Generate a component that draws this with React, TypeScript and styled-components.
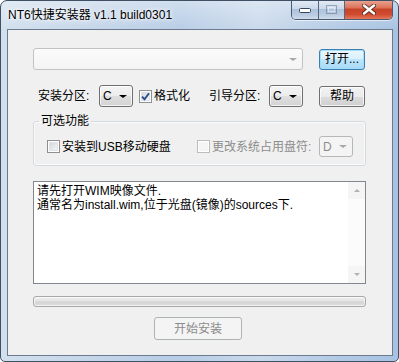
import styled, { createGlobalStyle } from "styled-components";

const GlobalStyle = createGlobalStyle`
  html, body {
    margin: 0;
    padding: 0;
    background: #ffffff;
  }
  body {
    font-family: "Liberation Sans", "Noto Sans CJK SC", sans-serif;
    font-size: 12px;
    color: #000;
  }
`;

const Frame = styled.div`
  width: 399px;
  height: 362px;
  box-sizing: border-box;
  border: 1px solid #3f5064;
  border-radius: 7px 7px 5px 5px;
  background: linear-gradient(
      180deg,
      rgba(255, 255, 255, 0.35) 0px,
      rgba(255, 255, 255, 0) 30px
    ),
    linear-gradient(
      90deg,
      #d2e0ee 0%,
      #c3d5e9 25%,
      #b7cde6 45%,
      #c9d9eb 65%,
      #b3cae5 85%,
      #a7c2e2 100%
    );
  display: flex;
  flex-direction: column;
  overflow: hidden;
`;

const TitleBar = styled.div`
  height: 28px;
  display: flex;
  justify-content: space-between;
  align-items: flex-start;
`;

const TitleText = styled.div`
  padding: 7px 0 0 7px;
  line-height: 14px;
  color: #000;
  text-shadow: 0 0 6px #ffffff, 0 0 3px #ffffff;
`;

const CaptionGroup = styled.div`
  display: flex;
  margin: -1px 5px 0 0;
  height: 19px;
  border: 1px solid #4a5a70;
  border-top: none;
  border-radius: 0 0 5px 5px;
  overflow: hidden;
  box-shadow: 0 1px 0 rgba(255, 255, 255, 0.6);
`;

const CaptionButton = styled.div<{ $kind: "min" | "max" | "close" }>`
  width: ${(p) => (p.$kind === "close" ? 47 : p.$kind === "min" ? 26 : 25)}px;
  display: flex;
  align-items: center;
  justify-content: center;
  border-left: ${(p) => (p.$kind === "min" ? "none" : "1px solid #56667c")};
  background: ${(p) =>
    p.$kind === "close"
      ? "linear-gradient(180deg, #e9a898 0%, #dc7459 40%, #c7432a 50%, #cf4a2f 75%, #e5785b 100%)"
      : "linear-gradient(180deg, #e4ecf5 0%, #cbd9ea 45%, #aec2db 50%, #bccde2 80%, #cfdcec 100%)"};
  box-shadow: inset 0 1px 0 rgba(255, 255, 255, 0.55);
`;

const Client = styled.div`
  flex: 1;
  margin: 0 5px 5px 6px;
  border: 1px solid #6b7a8c;
  background: #f0f0f0;
  padding: 18px 26px 0 25px;
  display: flex;
  flex-direction: column;
`;

const TopRow = styled.div<{ $gap?: number }>`
  display: grid;
  grid-template-columns: 270px 46px;
  column-gap: 16px;
  align-items: center;
  height: 22px;
  margin-top: ${(p) => p.$gap ?? 0}px;
`;

const ComboBox = styled.div`
  height: 22px;
  box-sizing: border-box;
  border: 1px solid #c2c2c2;
  border-radius: 3px;
  background: linear-gradient(180deg, #fbfbfb, #f4f4f4);
  display: flex;
  justify-content: flex-end;
  align-items: center;
  padding-right: 5px;
`;

const PushButton = styled.button<{ $focused?: boolean; $w?: number; $h?: number }>`
  width: ${(p) => p.$w ?? 46}px;
  height: ${(p) => p.$h ?? 21}px;
  padding: 0;
  font: inherit;
  line-height: 14px;
  color: #000;
  border: 1px solid ${(p) => (p.$focused ? "#3c7fb1" : "#707070")};
  border-radius: 3px;
  background: ${(p) =>
    p.$focused
      ? "linear-gradient(180deg, #eaf6fd 0%, #d9f0fc 50%, #bee6fd 50%, #a7d9f5 100%)"
      : "linear-gradient(180deg, #f2f2f2 0%, #ebebeb 50%, #dddddd 50%, #cfcfcf 100%)"};
  box-shadow: inset 0 0 0 1px
    ${(p) => (p.$focused ? "rgba(160, 220, 250, 0.9)" : "rgba(255, 255, 255, 0.75)")};
`;

const DisabledButton = styled.button`
  width: 88px;
  height: 23px;
  padding: 0;
  font: inherit;
  line-height: 14px;
  color: #8b8b8b;
  border: 1px solid #adb2b5;
  border-radius: 3px;
  background: #f4f4f4;
  align-self: flex-start;
  margin: 10px 0 0 121px;
`;

const LeftCluster = styled.div`
  display: flex;
  align-items: center;
  height: 22px;
  padding-left: 5px;
`;

const Label = styled.span<{ $w?: number; $ml?: number; $disabled?: boolean }>`
  display: inline-block;
  width: ${(p) => (p.$w ? `${p.$w}px` : "auto")};
  margin-left: ${(p) => p.$ml ?? 0}px;
  line-height: 14px;
  white-space: nowrap;
  color: ${(p) => (p.$disabled ? "#8d8d8d" : "#000")};
`;

const Select = styled.div<{ $disabled?: boolean; $h?: number }>`
  width: 34px;
  height: ${(p) => p.$h ?? 22}px;
  box-sizing: border-box;
  border: 1px solid ${(p) => (p.$disabled ? "#b4b8bb" : "#707070")};
  border-radius: 3px;
  background: ${(p) =>
    p.$disabled
      ? "#f4f4f4"
      : "linear-gradient(180deg, #f4f4f4 0%, #ececec 50%, #dfdfdf 50%, #d3d3d3 100%)"};
  box-shadow: ${(p) => (p.$disabled ? "none" : "inset 0 0 0 1px rgba(255,255,255,0.7)")};
  display: flex;
  align-items: center;
  justify-content: space-between;
  padding: 0 5px 0 3px;
  color: ${(p) => (p.$disabled ? "#8d8d8d" : "#000")};
  line-height: 14px;
`;

const Arrow = styled.span<{ $color: string; $size?: number }>`
  width: 0;
  height: 0;
  border-left: ${(p) => p.$size ?? 4}px solid transparent;
  border-right: ${(p) => p.$size ?? 4}px solid transparent;
  border-top: ${(p) => (p.$size ?? 4) - 1}px solid ${(p) => p.$color};
`;

const Box = styled.span<{ $disabled?: boolean; $ml?: number }>`
  width: 13px;
  height: 13px;
  flex: none;
  box-sizing: border-box;
  margin-left: ${(p) => p.$ml ?? 0}px;
  border: 1px solid ${(p) => (p.$disabled ? "#bcbcbc" : "#8e8f8f")};
  background: ${(p) =>
    p.$disabled ? "#f4f4f4" : "linear-gradient(135deg, #cdd1d7 0%, #e9ebee 60%, #f8f8f8 100%)"};
  box-shadow: ${(p) =>
    p.$disabled ? "inset 0 0 0 1px #ffffff" : "inset 0 0 0 1px #ffffff, inset 0 0 0 2px #dfe2e6"};
  display: flex;
  align-items: center;
  justify-content: center;
`;

const Group = styled.fieldset`
  margin: 7px 0 0;
  padding: 8px 11px 8px 13px;
  border: 1px solid #d5dadf;
  border-radius: 3px;
  box-shadow: inset 0 0 0 1px #fafafa;
  min-width: 0;
`;

const GroupTitle = styled.legend`
  padding: 0 2px;
  margin-left: -8px;
  line-height: 14px;
`;

const GroupRow = styled.div`
  display: flex;
  align-items: center;
  height: 21px;
`;

const TextBox = styled.div`
  margin-top: 15px;
  height: 103px;
  box-sizing: border-box;
  border: 1px solid #828790;
  background: #ffffff;
  display: flex;
`;

const TextBody = styled.div`
  flex: 1;
  padding: 2px 3px;
  line-height: 14px;
`;

const ScrollBar = styled.div`
  width: 17px;
  background: #fbfbfb;
  display: flex;
  flex-direction: column;
  justify-content: space-between;
`;

const ScrollArrow = styled.div<{ $up?: boolean }>`
  height: 17px;
  background: #f5f5f5;
  display: flex;
  align-items: center;
  justify-content: center;

  span {
    width: 0;
    height: 0;
    border-left: 3px solid transparent;
    border-right: 3px solid transparent;
    ${(p) => (p.$up ? "border-bottom" : "border-top")}: 3px solid #b2b2b2;
  }
`;

const Progress = styled.div`
  margin-top: 12px;
  height: 11px;
  box-sizing: border-box;
  border: 1px solid #a9a9a9;
  border-radius: 3px;
  background: linear-gradient(180deg, #f2f2f2 0%, #e2e2e2 45%, #d4d4d4 55%, #dedede 100%);
  box-shadow: inset 0 0 0 1px rgba(255, 255, 255, 0.6);
`;

const Check = () => (
  <svg width="9" height="9" viewBox="0 0 9 9">
    <path d="M1 4.6 L3.5 7.2 L8 1.2" fill="none" stroke="#2b4e91" strokeWidth="1.9" />
  </svg>
);

const CloseGlyph = () => (
  <svg width="14" height="11" viewBox="0 0 14 11">
    <path
      d="M2 1.5 L12 9.5 M12 1.5 L2 9.5"
      stroke="#3b1f1a"
      strokeWidth="4.2"
      strokeLinecap="round"
      opacity="0.75"
    />
    <path d="M2 1.5 L12 9.5 M12 1.5 L2 9.5" stroke="#ffffff" strokeWidth="2.4" strokeLinecap="round" />
  </svg>
);

const MinGlyph = () => (
  <svg width="12" height="6" viewBox="0 0 12 6">
    <rect x="0.5" y="1.5" width="11" height="4" rx="1" fill="#ffffff" stroke="#34465e" />
  </svg>
);

const MaxGlyph = () => (
  <svg width="11" height="9" viewBox="0 0 11 9" opacity="0.45">
    <rect x="0.5" y="0.5" width="10" height="8" fill="none" stroke="#4c5f78" />
    <rect x="2.5" y="2.5" width="6" height="4" fill="none" stroke="#ffffff" />
  </svg>
);

export default function App() {
  return (
    <>
      <GlobalStyle />
      <Frame>
        <TitleBar>
          <TitleText>NT6快捷安装器 v1.1 build0301</TitleText>
          <CaptionGroup>
            <CaptionButton $kind="min">
              <MinGlyph />
            </CaptionButton>
            <CaptionButton $kind="max">
              <MaxGlyph />
            </CaptionButton>
            <CaptionButton $kind="close">
              <CloseGlyph />
            </CaptionButton>
          </CaptionGroup>
        </TitleBar>
        <Client>
          <TopRow>
            <ComboBox>
              <Arrow $color="#a8a8a8" $size={4} />
            </ComboBox>
            <PushButton $focused>打开...</PushButton>
          </TopRow>
          <TopRow $gap={15}>
            <LeftCluster>
              <Label $w={61}>安装分区:</Label>
              <Select>
                C<Arrow $color="#000" />
              </Select>
              <Box $ml={6}>
                <Check />
              </Box>
              <Label $w={55} $ml={2}>
                格式化
              </Label>
              <Label $w={60}>引导分区:</Label>
              <Select>
                C<Arrow $color="#000" />
              </Select>
            </LeftCluster>
            <PushButton>帮助</PushButton>
          </TopRow>
          <Group>
            <GroupTitle>可选功能</GroupTitle>
            <GroupRow>
              <Box />
              <Label $w={135} $ml={2}>
                安装到USB移动硬盘
              </Label>
              <Box $disabled />
              <Label $w={107} $ml={2} $disabled>
                更改系统占用盘符:
              </Label>
              <Select $disabled $h={21}>
                D<Arrow $color="#a8a8a8" />
              </Select>
            </GroupRow>
          </Group>
          <TextBox>
            <TextBody>
              请先打开WIM映像文件.
              <br />
              通常名为install.wim,位于光盘(镜像)的sources下.
            </TextBody>
            <ScrollBar>
              <ScrollArrow $up>
                <span />
              </ScrollArrow>
              <ScrollArrow>
                <span />
              </ScrollArrow>
            </ScrollBar>
          </TextBox>
          <Progress />
          <DisabledButton disabled>开始安装</DisabledButton>
        </Client>
      </Frame>
    </>
  );
}
